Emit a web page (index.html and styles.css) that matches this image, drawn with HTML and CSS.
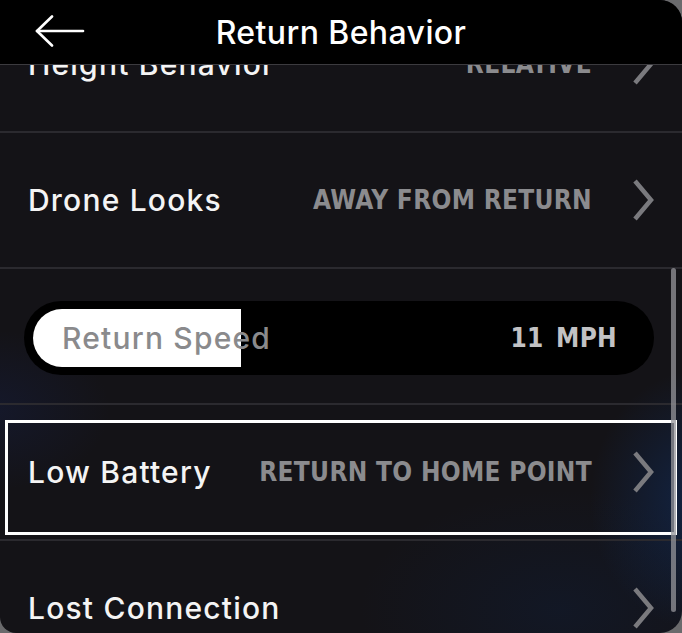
FILE: index.html
```html
<!DOCTYPE html>
<html lang="en">
<head>
  <meta charset="UTF-8" />
  <meta name="viewport" content="width=device-width, initial-scale=1.0"/>
  <title>Return Behavior</title>
  <link rel="stylesheet" href="styles.css">
</head>
<body>
  <div class="screen">
    <header class="topbar">
      <button class="back" aria-label="Back">
        <svg width="50" height="34" viewBox="0 0 50 34" fill="none" stroke="#fff" stroke-width="2.6" stroke-linecap="round" stroke-linejoin="round">
          <path d="M2 16 H48"/>
          <path d="M17 1.5 L2 16 L17 30.5"/>
        </svg>
      </button>
      <h1>Return Behavior</h1>
    </header>

    <div class="viewport">
      <ul class="settings">
        <li class="row">
          <span class="label">Height Behavior</span>
          <span class="value">RELATIVE</span>
          <svg class="chev" viewBox="0 0 24 44"><path d="M4 3 L20 22 L4 41"/></svg>
        </li>
        <li class="row">
          <span class="label">Drone Looks</span>
          <span class="value">AWAY FROM RETURN</span>
          <svg class="chev" viewBox="0 0 24 44"><path d="M4 3 L20 22 L4 41"/></svg>
        </li>
        <li class="row row-slider">
          <div class="pill">
            <div class="track" style="background-size: 34% 100%">
              <span class="track-label">Return Speed</span>
              <span class="track-value">11 MPH</span>
            </div>
          </div>
        </li>
        <li class="row focused">
          <span class="label">Low Battery</span>
          <span class="value">RETURN TO HOME POINT</span>
          <svg class="chev" viewBox="0 0 24 44"><path d="M4 3 L20 22 L4 41"/></svg>
        </li>
        <li class="row">
          <span class="label">Lost Connection</span>
          <span class="value"></span>
          <svg class="chev" viewBox="0 0 24 44"><path d="M4 3 L20 22 L4 41"/></svg>
        </li>
      </ul>
      <div class="scrollbar"></div>
    </div>
  </div>
</body>
</html>
```

FILE: styles.css
```css
html, body {
  margin: 0;
  padding: 0;
  height: 100%;
}
body {
  background: #6a6a6c;
  font-family: Inter, 'Noto Sans', sans-serif;
  overflow: hidden;
}
.screen {
  width: 682px;
  height: 633px;
  display: flex;
  flex-direction: column;
  background:
    radial-gradient(ellipse 110px 130px at 700px 500px, rgba(16, 52, 112, 0.5), transparent),
    radial-gradient(ellipse 120px 80px at -10px 410px, rgba(22, 34, 80, 0.35), transparent),
    radial-gradient(ellipse 200px 120px at 560px 610px, rgba(14, 34, 70, 0.3), transparent),
    #141317;
  border-radius: 0 22px 22px 16px;
  overflow: hidden;
}

/* top bar */
.topbar {
  flex: none;
  height: 64px;
  background: #000;
  border-bottom: 1px solid #3c3b3f;
  display: flex;
  align-items: center;
  justify-content: center;
  position: relative;
}
.topbar h1 {
  margin: 0;
  color: #fff;
  font-size: 32px;
  font-weight: 500;
  letter-spacing: 0.4px;
}
.back {
  position: absolute;
  left: 35px;
  top: 15px;
  background: none;
  border: 0;
  padding: 0;
  line-height: 0;
}

/* list */
.viewport {
  flex: 1;
  position: relative;
  overflow: hidden;
}
.settings {
  list-style: none;
  margin: -68px 0 0 0;
  padding: 0;
}
.row {
  height: 134px;
  border-bottom: 2px solid #2b2a2f;
  display: flex;
  align-items: center;
  padding: 0 27px 0 28px;
  position: relative;
}
.label {
  color: #f4f4f4;
  font-size: 30px;
  font-weight: 500;
  letter-spacing: 1.2px;
}
.value {
  margin-left: auto;
  color: #8b8b8e;
  font-family: 'DejaVu Sans Condensed', 'Liberation Sans', sans-serif;
  font-weight: bold;
  font-size: 26px;
  letter-spacing: 0.3px;
}
.chev {
  width: 24px;
  height: 44px;
  margin-left: 39px;
  fill: none;
  stroke: #7a7a7e;
  stroke-width: 4.5;
}

/* slider row */
.row-slider {
  padding: 0 28px 0 24px;
}
.pill {
  flex: 1;
  height: 58px;
  padding: 8px 9px;
  margin-top: 4px;
  background: #000;
  border-radius: 37px;
}
.track {
  height: 58px;
  border-radius: 29px 0 0 29px;
  background: linear-gradient(#fff, #fff) no-repeat;
  display: flex;
  align-items: center;
  padding: 0 28px 0 29px;
}
.track-label {
  color: #8a8a8c;
  font-size: 30px;
  font-weight: 500;
  letter-spacing: 1.2px;
}
.track-value {
  margin-left: auto;
  color: #c2c2c4;
  font-family: 'DejaVu Sans Condensed', 'Liberation Sans', sans-serif;
  font-weight: bold;
  font-size: 26px;
  letter-spacing: 0.3px;
  word-spacing: 4px;
}

/* focus ring on the selected row */
.focused::after {
  content: '';
  position: absolute;
  left: 5px;
  right: 5px;
  top: 15px;
  bottom: 4px;
  border: 3px solid #fff;
}

.scrollbar {
  position: absolute;
  right: 6px;
  top: 203px;
  width: 5px;
  height: 344px;
  border-radius: 3px;
  background: rgba(150, 150, 155, 0.75);
}
```
